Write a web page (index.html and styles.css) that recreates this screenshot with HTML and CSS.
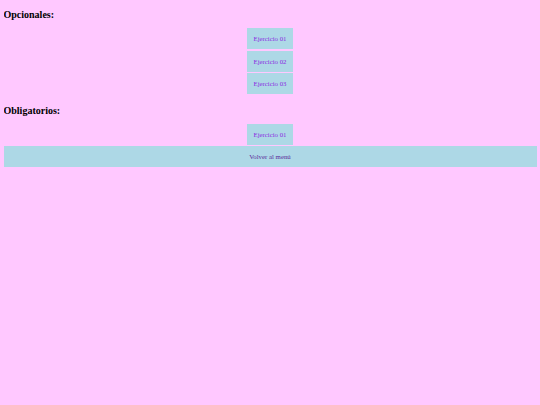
FILE: index.html
```html
<!DOCTYPE html>
<html lang="es">
<head>
<meta charset="utf-8">
<title>Ejercicios</title>
<link rel="stylesheet" href="styles.css">
</head>
<body>
<h3 class="section-title">Opcionales:</h3>
<div class="list">
  <a class="btn" href="#">Ejercicio 01</a>
  <a class="btn" href="#">Ejercicio 02</a>
  <a class="btn" href="#">Ejercicio 03</a>
</div>
<h3 class="section-title">Obligatorios:</h3>
<div class="list">
  <a class="btn" href="#">Ejercicio 01</a>
</div>
<a class="back" href="#">Volver al menú</a>
</body>
</html>
```
FILE: styles.css
```css
html {
  background: #ffc8ff;
}
body {
  margin: 0 3.5px;
  padding-top: 0.1px;
  font-family: "Liberation Serif", "Times New Roman", serif;
  background: #ffc8ff;
}
.section-title {
  font-size: 10px;
  font-weight: bold;
  line-height: 12px;
  margin: 9px 0 7px;
  color: #000;
}
.list + .section-title {
  margin-top: 10.5px;
}
.list {
  display: flex;
  flex-direction: column;
  align-items: center;
  gap: 1.5px;
}
.btn {
  display: block;
  width: 46px;
  height: 21px;
  line-height: 21px;
  text-align: center;
  background: #add8e6;
  color: #8a2be2;
  font-size: 6.8px;
  text-decoration: none;
}
.back {
  display: block;
  margin-top: 1.5px;
  height: 21px;
  line-height: 21px;
  text-align: center;
  background: #add8e6;
  color: #5b2d9b;
  font-size: 6.8px;
  text-decoration: none;
}
```
